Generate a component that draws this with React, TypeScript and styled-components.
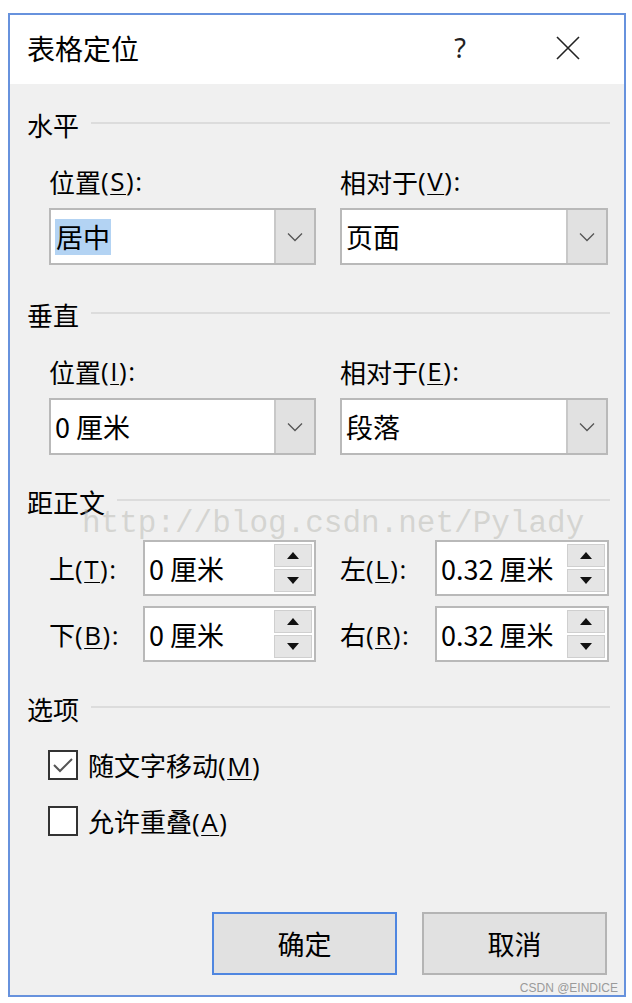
import React from "react";
import styled, { createGlobalStyle } from "styled-components";

const Global = createGlobalStyle`
  html, body { margin: 0; padding: 0; background: #ffffff; }
  body { font-family: "Noto Sans CJK SC", "Noto Sans", sans-serif; color: #000; }
  * { box-sizing: border-box; }
`;

const Page = styled.div`
  width: 632px;
  height: 1003px;
  padding: 13px 6px 6px 8px;
`;

const Window = styled.div`
  position: relative;
  width: 618px;
  height: 984px;
  border: 2px solid #6792dd;
  background: #f0f0f0;
  display: flex;
  flex-direction: column;
  overflow: hidden;
`;

const TitleBar = styled.div`
  height: 69px;
  background: #ffffff;
  display: flex;
  align-items: center;
  padding: 0 0 4px 17px;
`;

const Title = styled.div`
  flex: 1;
  font-size: 28px;
`;

const TitleBtn = styled.div<{ $w: number }>`
  width: ${(p) => p.$w}px;
  display: flex;
  justify-content: center;
  align-items: center;
  font-family: "Noto Sans", sans-serif;
  font-size: 27px;
  color: #222;
`;

const Body = styled.div`
  flex: 1;
  display: flex;
  flex-direction: column;
  padding: 24px 14px 0 17px;
`;

const SectionHeader = styled.div<{ $mt?: number }>`
  height: 32px;
  margin-top: ${(p) => p.$mt ?? 0}px;
  display: flex;
  align-items: center;
  gap: 12px;
  font-size: 26px;
  &::after {
    content: "";
    flex: 1;
    height: 2px;
    background: #dcdcdc;
    margin-top: -2px;
  }
`;

const Key = styled.span`
  font-family: "Open Sans", "Noto Sans", sans-serif;
  letter-spacing: 1.5px;
  u { text-decoration-thickness: 1px; text-underline-offset: 3px; }
`;

const TwoCols = styled.div`
  padding-left: 22px;
  padding-right: 1px;
  display: grid;
  grid-template-columns: 267px 268px;
  column-gap: 24px;
`;

const Field = styled.div`
  display: flex;
  flex-direction: column;
`;

const Label = styled.div`
  height: 30px;
  display: flex;
  align-items: center;
  font-size: 26px;
  margin-top: 26px;
  margin-bottom: 12px;
  white-space: nowrap;
`;

const Combo = styled.div`
  height: 57px;
  border: 2px solid #b9b9b9;
  background: #ffffff;
  display: flex;
`;

const ComboText = styled.div`
  flex: 1;
  display: flex;
  align-items: center;
  padding-left: 4px;
  font-size: 27px;
`;

const Selected = styled.span`
  background: #b3d3f3;
  padding: 0 1px;
  line-height: 36px;
`;

const ComboButton = styled.div`
  width: 40px;
  background: #e1e1e1;
  border-left: 2px solid #c8c8c8;
  display: flex;
  align-items: center;
  justify-content: center;
`;

const SpinRows = styled.div`
  margin-top: 23px;
  padding-left: 22px;
  padding-right: 1px;
  display: grid;
  grid-template-columns: 267px 269px;
  column-gap: 24px;
  row-gap: 10px;
`;

const SpinField = styled.div<{ $labelW: number }>`
  display: grid;
  grid-template-columns: ${(p) => p.$labelW}px 1fr;
  align-items: center;
`;

const SpinLabel = styled.div`
  font-size: 26px;
  white-space: nowrap;
`;

const SpinBox = styled.div`
  height: 56px;
  border: 2px solid #b9b9b9;
  background: #ffffff;
  display: flex;
`;

const SpinText = styled.div`
  flex: 1;
  display: flex;
  align-items: center;
  padding-left: 4px;
  font-size: 27px;
  white-space: nowrap;
  overflow: hidden;
`;

const SpinButtons = styled.div`
  width: 40px;
  display: flex;
  flex-direction: column;
  gap: 2px;
  padding: 2px 2px 2px 0;
`;

const SpinBtn = styled.div`
  flex: 1;
  background: #e5e5e5;
  border: 1px solid #cfcfcf;
  display: flex;
  align-items: center;
  justify-content: center;
`;

const Watermark = styled.div`
  position: absolute;
  left: 72px;
  top: 493px;
  line-height: 1;
  font-family: "Liberation Mono", "DejaVu Sans Mono", monospace;
  font-size: 31px;
  color: rgba(185, 185, 178, 0.5);
  pointer-events: none;
  white-space: nowrap;
`;

const Checks = styled.div`
  margin-top: 26px;
  padding-left: 21px;
  display: flex;
  flex-direction: column;
  gap: 26px;
`;

const CheckRow = styled.div`
  display: flex;
  align-items: center;
  gap: 10px;
  height: 30px;
`;

const CheckLabel = styled.span`
  font-size: 26px;
  white-space: nowrap;
`;

const Box = styled.div`
  width: 30px;
  height: 30px;
  border: 2px solid #333333;
  background: #ffffff;
  display: flex;
  align-items: center;
  justify-content: center;
`;

const Footer = styled.div`
  margin-top: auto;
  margin-bottom: 20px;
  display: flex;
  justify-content: flex-end;
  gap: 25px;
  padding-right: 3px;
`;

const Button = styled.div<{ $primary?: boolean }>`
  width: 185px;
  height: 63px;
  background: #e1e1e1;
  border: 2px solid ${(p) => (p.$primary ? "#4f86e0" : "#b4b4b4")};
  display: flex;
  align-items: center;
  justify-content: center;
  font-size: 27px;
`;

const Credit = styled.div`
  position: absolute;
  right: 6px;
  bottom: 0px;
  font-family: "Liberation Sans", Arial, sans-serif;
  font-size: 12px;
  color: #9a9a9a;
`;

const Chevron = () => (
  <svg width="16" height="10" viewBox="0 0 16 10">
    <path d="M1 1.5 L8 8.5 L15 1.5" fill="none" stroke="#555" strokeWidth="1.3" />
  </svg>
);

const Up = () => (
  <svg width="12" height="7" viewBox="0 0 12 7">
    <path d="M6 0 L12 7 L0 7 Z" fill="#111" />
  </svg>
);

const Down = () => (
  <svg width="12" height="7" viewBox="0 0 12 7">
    <path d="M0 0 L12 0 L6 7 Z" fill="#111" />
  </svg>
);

const CloseX = () => (
  <svg width="24" height="24" viewBox="0 0 24 24">
    <path d="M1 1 L23 23 M23 1 L1 23" stroke="#222" strokeWidth="1.6" />
  </svg>
);

const Check = () => (
  <svg width="22" height="18" viewBox="0 0 22 18">
    <path d="M2 9 L8 15 L20 3" fill="none" stroke="#555" strokeWidth="2" />
  </svg>
);

function Mn({ k, colon }: { k: string; colon?: boolean }) {
  return (
    <Key>
      (<u>{k}</u>){colon ? ":" : ""}
    </Key>
  );
}

function Spin({ label, under, value, labelW }: { label: string; under: string; value: string; labelW: number }) {
  return (
    <SpinField $labelW={labelW}>
      <SpinLabel>
        {label}
        <Mn k={under} colon />
      </SpinLabel>
      <SpinBox>
        <SpinText>{value}</SpinText>
        <SpinButtons>
          <SpinBtn><Up /></SpinBtn>
          <SpinBtn><Down /></SpinBtn>
        </SpinButtons>
      </SpinBox>
    </SpinField>
  );
}

export default function App() {
  return (
    <Page>
      <Global />
      <Window>
        <TitleBar>
          <Title>表格定位</Title>
          <TitleBtn $w={40}>?</TitleBtn>
          <TitleBtn $w={64} />
          <TitleBtn $w={48}><CloseX /></TitleBtn>
          <TitleBtn $w={32} />
        </TitleBar>
        <Body>
          <SectionHeader>水平</SectionHeader>
          <TwoCols>
            <Field>
              <Label>位置<Mn k="S" colon /></Label>
              <Combo>
                <ComboText><Selected>居中</Selected></ComboText>
                <ComboButton><Chevron /></ComboButton>
              </Combo>
            </Field>
            <Field>
              <Label>相对于<Mn k="V" colon /></Label>
              <Combo>
                <ComboText>页面</ComboText>
                <ComboButton><Chevron /></ComboButton>
              </Combo>
            </Field>
          </TwoCols>

          <SectionHeader $mt={33}>垂直</SectionHeader>
          <TwoCols>
            <Field>
              <Label>位置<Mn k="I" colon /></Label>
              <Combo>
                <ComboText>0 厘米</ComboText>
                <ComboButton><Chevron /></ComboButton>
              </Combo>
            </Field>
            <Field>
              <Label>相对于<Mn k="E" colon /></Label>
              <Combo>
                <ComboText>段落</ComboText>
                <ComboButton><Chevron /></ComboButton>
              </Combo>
            </Field>
          </TwoCols>

          <SectionHeader $mt={30}>距正文</SectionHeader>
          <SpinRows>
            <Spin label="上" under="T" value="0 厘米" labelW={94} />
            <Spin label="左" under="L" value="0.32 厘米" labelW={95} />
            <Spin label="下" under="B" value="0 厘米" labelW={94} />
            <Spin label="右" under="R" value="0.32 厘米" labelW={95} />
          </SpinRows>

          <SectionHeader $mt={30}>选项</SectionHeader>
          <Checks>
            <CheckRow>
              <Box><Check /></Box>
              <CheckLabel>随文字移动<Mn k="M" /></CheckLabel>
            </CheckRow>
            <CheckRow>
              <Box />
              <CheckLabel>允许重叠<Mn k="A" /></CheckLabel>
            </CheckRow>
          </Checks>

          <Footer>
            <Button $primary>确定</Button>
            <Button>取消</Button>
          </Footer>
        </Body>
        <Watermark>http://blog.csdn.net/Pylady</Watermark>
        <Credit>CSDN @EINDICE</Credit>
      </Window>
    </Page>
  );
}
